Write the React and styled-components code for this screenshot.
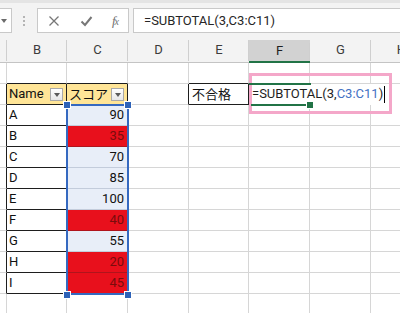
import React from "react";
import styled, { createGlobalStyle } from "styled-components";

const GlobalStyle = createGlobalStyle`
	html, body {
		margin: 0;
		padding: 0;
		background: #ffffff;
	}
	body {
		font-family: Roboto, "Liberation Sans", "Noto Sans CJK JP", sans-serif;
	}
`;

// widths of columns A..H (A and H are cut by the window)
const COLS = "7px 60px 61px 61px 60px 61px 61px 61px";
const GRID = "#d6d6d6";
const DARK = "#1e1e1e";
const GREEN = "#217346";

const Page = styled.div`
	width: 400px;
	height: 313px;
	overflow: hidden;
	background: #ffffff;
`;

/* formula bar */
const Toolbar = styled.div`
	height: 37px;
	box-sizing: border-box;
	background: #f3f3f3;
	border-top: 3px solid #e4e4e4;
	padding-top: 5px;
	display: flex;
	align-items: flex-start;
`;

const NameBox = styled.div`
	width: 12px;
	height: 25px;
	box-sizing: border-box;
	background: #fff;
	border: 1px solid #c9c9c9;
	border-left: none;
	display: flex;
	align-items: center;
	padding-left: 1px;
`;

const Caret = styled.span`
	width: 0;
	height: 0;
	border-left: 3px solid transparent;
	border-right: 3px solid transparent;
	border-top: 4px solid ${(p) => p.$color || "#6b6b6b"};
`;

const Dots = styled.div`
	margin-left: 11px;
	height: 25px;
	display: flex;
	flex-direction: column;
	justify-content: center;
	gap: 2px;
	span {
		width: 2px;
		height: 2px;
		background: #b4b4b4;
	}
`;

const ButtonBox = styled.div`
	margin-left: 12px;
	width: 92px;
	height: 25px;
	box-sizing: border-box;
	background: #fff;
	border: 1px solid #c9c9c9;
	display: grid;
	grid-template-columns: 32px 32px 26px;
	align-items: center;
	justify-items: center;
`;

const Fx = styled.span`
	font-family: "Liberation Serif", serif;
	font-style: italic;
	font-size: 13px;
	color: #707070;
	letter-spacing: -1px;
	span {
		font-size: 10px;
	}
`;

const FormulaBox = styled.div`
	margin-left: 4px;
	flex: 1;
	height: 25px;
	box-sizing: border-box;
	background: #fff;
	border: 1px solid #c9c9c9;
	border-right: none;
	padding-left: 10px;
	font-size: 13px;
	line-height: 23px;
	color: #262626;
	white-space: nowrap;
`;

/* column letters */
const HeaderRow = styled.div`
	height: 26px;
	box-sizing: border-box;
	display: grid;
	grid-template-columns: ${COLS};
	background: #f3f3f3;
	border-bottom: 1px solid #c4c4c4;
`;

const ColHead = styled.div`
	position: relative;
	display: flex;
	align-items: center;
	justify-content: center;
	font-size: 13px;
	color: ${(p) => (p.$active ? "#1f1f1f" : "#3c3c3c")};
	background: ${(p) => (p.$active ? "#d2d2d2" : "transparent")};
	margin-top: ${(p) => (p.$active ? "3px" : "0")};
	border-bottom: 2px solid ${(p) => (p.$active ? GREEN : "transparent")};
	margin-bottom: -1px;
	&::after {
		content: "";
		position: absolute;
		right: 0;
		top: 3px;
		bottom: 0;
		width: 1px;
		background: #cfcfcf;
	}
`;

/* cells */
const Sheet = styled.div`
	position: relative;
	display: grid;
	grid-template-columns: ${COLS};
	grid-auto-rows: 21px;
`;

const Cell = styled.div`
	box-sizing: border-box;
	min-width: 0;
	border-right: 1px solid ${(p) => p.$rb || GRID};
	border-bottom: 1px solid ${(p) => p.$bb || GRID};
	background: ${(p) => p.$bg || "#fff"};
	color: ${(p) => p.$color || "#111"};
	font-size: 13px;
	line-height: 20px;
	padding: 0 3px 0 2px;
	text-align: ${(p) => p.$align || "left"};
	white-space: nowrap;
	display: flex;
	align-items: center;
	justify-content: ${(p) => (p.$align === "right" ? "flex-end" : "flex-start")};
	${(p) => p.$span && `grid-column: span ${p.$span};`}
`;

const HeadLabel = styled.span`
	flex: 1;
	font-family: ${(p) => (p.$jp ? '"Noto Sans CJK JP", sans-serif' : "inherit")};
`;

const Jp = styled.span`
	font-family: "Noto Sans CJK JP", sans-serif;
	font-size: 13px;
	padding-left: 1px;
`;

const FilterButton = styled.span`
	width: 13px;
	height: 13px;
	box-sizing: border-box;
	border: 1px solid #a9a9a9;
	background: linear-gradient(#ffffff, #e6e6e6);
	display: flex;
	align-items: center;
	justify-content: center;
	padding-top: 1px;
`;

const EditText = styled.span`
	padding-left: 1px;
	color: #1e1e1e;
	em {
		font-style: normal;
		color: #4472c4;
	}
`;

const Cursor = styled.span`
	display: inline-block;
	width: 1px;
	height: 17px;
	background: #000;
	vertical-align: middle;
	margin-left: 1px;
`;

/* overlays */
const Selection = styled.div`
	position: absolute;
	left: 66px;
	top: 41px;
	width: 63px;
	height: 191px;
	box-sizing: border-box;
	border: 2px solid #3569c0;
	pointer-events: none;
`;

const Handle = styled.div`
	position: absolute;
	width: 6px;
	height: 6px;
	background: ${(p) => p.$color || "#2d62b8"};
	border: 1px solid #fff;
	left: ${(p) => p.$x - 4}px;
	top: ${(p) => p.$y - 4}px;
`;

const EditFrame = styled.div`
	position: absolute;
	left: 249px;
	top: 10px;
	width: 143px;
	height: 41px;
	box-sizing: border-box;
	border: 3px solid #f4a7c9;
`;

const GreenBar = styled.div`
	position: absolute;
	height: 2px;
	background: ${GREEN};
	left: ${(p) => p.$x}px;
	top: ${(p) => p.$y}px;
	width: ${(p) => p.$w}px;
`;

const scores = [
	["A", 90],
	["B", 35, true],
	["C", 70],
	["D", 85],
	["E", 100],
	["F", 40, true],
	["G", 55],
	["H", 20, true],
	["I", 45, true]
];

function XIcon() {
	return (
		<svg width="12" height="12" viewBox="0 0 12 12">
			<path d="M1.5 1.5 L10.5 10.5 M10.5 1.5 L1.5 10.5" stroke="#777" strokeWidth="1.3" fill="none" />
		</svg>
	);
}

function CheckIcon() {
	return (
		<svg width="13" height="12" viewBox="0 0 13 12">
			<path d="M1.5 6.5 L5 10 L11.5 2" stroke="#777" strokeWidth="2" fill="none" />
		</svg>
	);
}

export default function App() {
	const letters = ["", "B", "C", "D", "E", "F", "G", "H"];

	return (
		<Page>
			<GlobalStyle />
			<Toolbar>
				<NameBox>
					<Caret />
				</NameBox>
				<Dots>
					<span />
					<span />
					<span />
				</Dots>
				<ButtonBox>
					<XIcon />
					<CheckIcon />
					<Fx>
						f<span>x</span>
					</Fx>
				</ButtonBox>
				<FormulaBox>=SUBTOTAL(3,C3:C11)</FormulaBox>
			</Toolbar>

			<HeaderRow>
				{letters.map((l, i) => (
					<ColHead key={i} $active={l === "F"}>
						{l}
					</ColHead>
				))}
			</HeaderRow>

			<Sheet>
				{/* row 1 */}
				<Cell />
				<Cell $bb={DARK} />
				<Cell $bb={DARK} />
				<Cell />
				<Cell $bb={DARK} />
				<Cell />
				<Cell />
				<Cell />

				{/* row 2 */}
				<Cell $rb={DARK} />
				<Cell $bg="#ffe597" $rb={DARK} $bb={DARK}>
					<HeadLabel>Name</HeadLabel>
					<FilterButton>
						<Caret $color="#5a5a5a" />
					</FilterButton>
				</Cell>
				<Cell $bg="#ffe597" $rb={DARK} $bb="#3569c0">
					<HeadLabel $jp>スコア</HeadLabel>
					<FilterButton>
						<Caret $color="#5a5a5a" />
					</FilterButton>
				</Cell>
				<Cell $rb={DARK} />
				<Cell $rb={DARK} $bb={DARK}>
					<Jp>不合格</Jp>
				</Cell>
				<Cell $span={3} $rb="#fff" $bb="#fff">
					<EditText>
						=SUBTOTAL(3,<em>C3:C11</em>)
					</EditText>
					<Cursor />
				</Cell>

				{/* rows 3..11 */}
				{scores.map(([name, score, fail]) => (
					<React.Fragment key={name}>
						<Cell $rb={DARK} />
						<Cell $rb={DARK} $bb={DARK}>
							{name}
						</Cell>
						<Cell
							$align="right"
							$bg={fail ? "#e8101c" : "#e8eef8"}
							$color={fail ? "#7a0c0c" : "#111"}
							$bb={fail ? "#b0141c" : "#c3ccdb"}
						>
							{score}
						</Cell>
						<Cell />
						<Cell />
						<Cell />
						<Cell />
						<Cell />
					</React.Fragment>
				))}

				{/* row 12 */}
				{letters.map((l, i) => (
					<Cell key={"r12" + i} />
				))}

				<Selection />
				<Handle $x={67} $y={42} />
				<Handle $x={128} $y={42} />
				<Handle $x={67} $y={232} />
				<Handle $x={128} $y={232} />

				<EditFrame />
				<GreenBar $x={249} $y={20} $w={62} />
				<GreenBar $x={251} $y={41} $w={57} />
				<Handle $x={310} $y={42} $color={GREEN} />
			</Sheet>
		</Page>
	);
}
